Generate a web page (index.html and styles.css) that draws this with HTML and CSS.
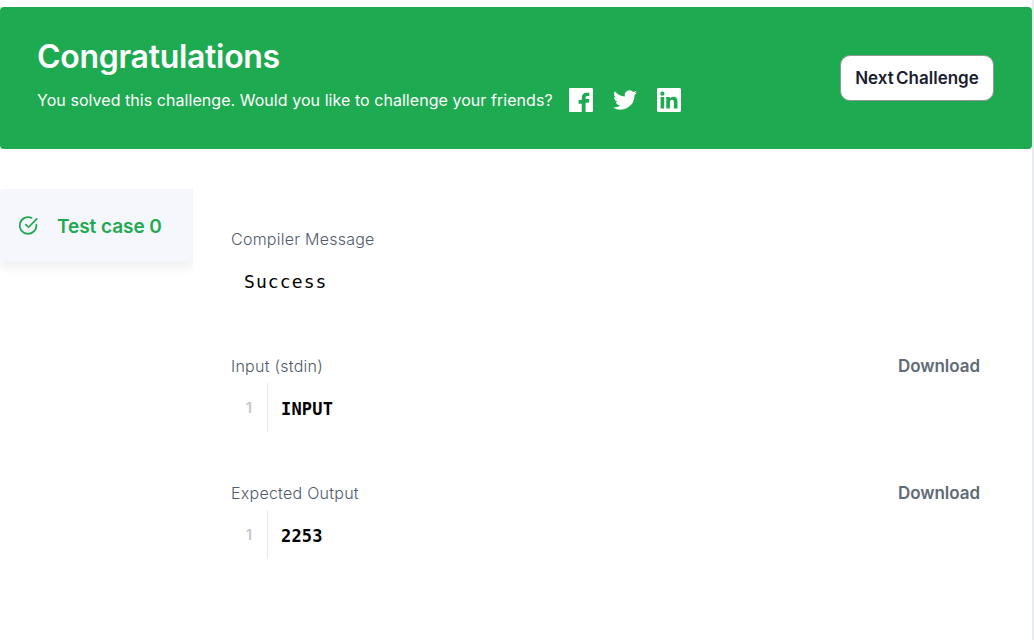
FILE: index.html
```html
<!DOCTYPE html>
<html lang="en">
<head>
    <meta charset="UTF-8">
    <title>Congratulations</title>
    <link rel="stylesheet" href="styles.css">
</head>
<body>
<div class="page">
    <div class="banner">
        <div class="banner-text">
            <h1>Congratulations</h1>
            <div class="share">
                <span class="share-text">You solved this challenge. Would you like to challenge your friends?</span>
                <svg class="share-icon" viewBox="0 0 24 24"><path fill="#fff" d="M1.3 0h21.4c.7 0 1.3.6 1.3 1.3v21.4c0 .7-.6 1.3-1.3 1.3h-6.1v-9.3h3.1l.5-3.6h-3.6V9.8c0-1 .3-1.8 1.8-1.8h1.9V4.800c-.3 0-1.500-.1-2.800-.1-2.800 0-4.700 1.700-4.700 4.800v2.600H9.600v3.600h3.100V24H1.300C.6 24 0 23.400 0 22.700V1.300C0 .6.600 0 1.300 0z"/></svg>
                <svg class="share-icon" viewBox="0 0 24 24"><path fill="#fff" d="M24 4.600c-.9.400-1.800.7-2.800.8 1-.6 1.800-1.600 2.200-2.700-1 .6-2 1-3.100 1.200A4.900 4.900 0 0 0 11.900 8.400C7.800 8.200 4.200 6.200 1.700 3.200c-1.300 2.300-.6 5.100 1.500 6.500-.8 0-1.500-.2-2.200-.6 0 2.300 1.600 4.400 3.900 4.900-.7.200-1.500.2-2.200.1.600 2 2.400 3.400 4.600 3.400A9.900 9.900 0 0 1 0 19.500 14 14 0 0 0 21.500 7.100c1-.7 1.800-1.500 2.500-2.500z"/></svg>
                <svg class="share-icon" viewBox="0 0 24 24"><path fill="#fff" fill-rule="evenodd" d="M1.500 0h21C23.300 0 24 .7 24 1.500v21c0 .8-.7 1.500-1.500 1.500h-21C.7 24 0 23.300 0 22.500v-21C0 .7.700 0 1.500 0zM3.600 9v11.400h3.600V9H3.600zM5.400 3.600a2.100 2.100 0 1 0 0 4.200 2.100 2.100 0 0 0 0-4.200zM9.300 9v11.400h3.600v-5.700c0-1.500.3-3 2.200-3 1.800 0 1.800 1.700 1.800 3.100v5.600h3.600v-6.200c0-3.100-.7-5.500-4.300-5.500-1.700 0-2.900.9-3.400 1.800V9H9.300z"/></svg>
            </div>
        </div>
        <a class="next-btn">Next Challenge</a>
    </div>

    <div class="result">
        <div class="tabs">
            <div class="tab">
                <svg class="tab-icon" viewBox="0 0 24 24" fill="none" stroke="#1ea94f" stroke-width="2" stroke-linecap="round" stroke-linejoin="round"><path d="M21 11v1a9.500 9.500 0 1 1-5.600-8.700"/><path d="M21.500 4.500 12 14l-3-3"/></svg>
                <span class="tab-label">Test case 0</span>
            </div>
        </div>
        <div class="details">
            <div class="block block-compiler">
                <div class="block-head"><span class="block-title">Compiler Message</span></div>
                <pre class="message">Success</pre>
            </div>
            <div class="block">
                <div class="block-head"><span class="block-title">Input (stdin)</span><a class="download">Download</a></div>
                <div class="code"><span class="line-no">1</span><span class="line">INPUT</span></div>
            </div>
            <div class="block">
                <div class="block-head"><span class="block-title">Expected Output</span><a class="download">Download</a></div>
                <div class="code"><span class="line-no">1</span><span class="line">2253</span></div>
            </div>
        </div>
    </div>
</div>
</body>
</html>
```

FILE: styles.css
```css
html, body {
    margin: 0;
    padding: 0;
    height: 640px;
    overflow: hidden;
    background-color: #fff;
}
body {
    font-family: Inter, "Liberation Sans", sans-serif;
}
.page {
    height: 640px;
    padding-top: 7px;
    box-sizing: border-box;
    border-right: 2px solid #e8ebf2;
}
.banner {
    height: 142px;
    background-color: #1eaa50;
    border-radius: 4px;
    padding: 0 38px 0 37px;
    display: flex;
    align-items: center;
    justify-content: space-between;
    box-sizing: border-box;
    color: #fff;
}
.banner-text {
    padding-bottom: 9px;
}
h1 {
    margin: 0 0 9px;
    font-size: 32px;
    line-height: 44px;
    font-weight: 600;
    letter-spacing: -0.3px;
}
.share {
    display: flex;
    align-items: center;
    height: 24px;
}
.share-text {
    width: 516px;
    font-size: 16px;
    font-weight: 400;
    letter-spacing: 0.05px;
    margin-right: 16px;
    white-space: nowrap;
}
.share-icon {
    width: 24px;
    height: 24px;
    margin-right: 20px;
}
.next-btn {
    display: block;
    width: 152px;
    height: 44px;
    line-height: 44px;
    text-align: center;
    background-color: #fff;
    border: 1px solid #8f9a96;
    border-radius: 10px;
    color: #1a1d2e;
    font-size: 17px;
    font-weight: 600;
    word-spacing: -2px;
}
.result {
    display: flex;
    padding-top: 40px;
}
.tabs {
    width: 193px;
    height: 95px;
    flex-shrink: 0;
    overflow: hidden;
}
.tab {
    height: 73px;
    background-color: #f6f7fc;
    border-radius: 4px 0 0 4px;
    box-shadow: 0 6px 10px rgba(0,0,0,0.06);
    display: flex;
    align-items: center;
    padding-left: 18px;
    box-sizing: border-box;
    color: #1eaa50;
    font-size: 19px;
    font-weight: 600;
}
.tab-label {
    padding-top: 2px;
    letter-spacing: -0.05px;
}
.tab-icon {
    width: 21px;
    height: 21px;
    margin-right: 18px;
}
.details {
    flex: 1;
    padding: 40px 52px 0 38px;
}
.block {
    margin-bottom: 51px;
}
.block-compiler {
    margin-bottom: 62px;
}
.block-head {
    display: flex;
    justify-content: space-between;
    align-items: center;
    height: 20px;
}
.block-title {
    font-size: 16px;
    font-weight: 300;
    letter-spacing: 0.25px;
    color: #4f5b6a;
}
.download {
    font-size: 17px;
    font-weight: 600;
    color: #5f6b76;
    letter-spacing: -0.05px;
}
.message {
    margin: 21px 0 0 13px;
    font-family: "DejaVu Sans Mono", monospace;
    font-size: 18px;
    letter-spacing: 1.1px;
    line-height: 24px;
    color: #000;
}
.code {
    display: flex;
    height: 49px;
    margin-top: 7px;
    align-items: center;
    font-family: "DejaVu Sans Mono", monospace;
    font-size: 17px;
    font-weight: 700;
}
.line-no {
    width: 37px;
    height: 49px;
    line-height: 50px;
    padding-right: 15px;
    box-sizing: border-box;
    text-align: right;
    border-right: 1px solid #e6e9ee;
    color: #c4c8cc;
    font-family: Inter, sans-serif;
    font-size: 15px;
    font-weight: 600;
}
.line {
    margin-left: 13px;
    padding-top: 2px;
    letter-spacing: 0.2px;
    color: #000;
}
```
